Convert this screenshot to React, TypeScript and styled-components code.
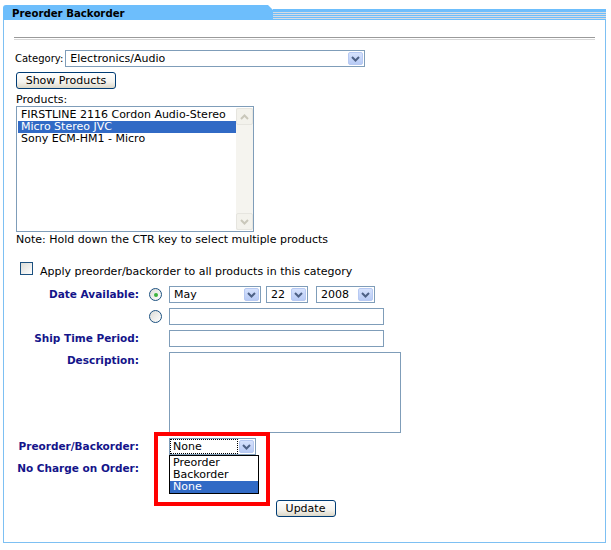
import styled, { createGlobalStyle } from "styled-components";

const GlobalStyle = createGlobalStyle`
  html, body {
    margin: 0;
    padding: 0;
    background: #ffffff;
  }
  body {
    font-family: "DejaVu Sans", Verdana, sans-serif;
    font-size: 11px;
    color: #000000;
  }
`;

const Panel = styled.div`
  margin: 5px 0 0 3px;
  width: 603px;
`;

const Header = styled.div`
  display: flex;
  align-items: flex-end;
  height: 15px;
`;

const Tab = styled.div`
  width: 270px;
  height: 15px;
  background: #6dbefc;
  border-top-left-radius: 3px;
  clip-path: polygon(0 0, 265px 0, 270px 5px, 270px 100%, 0 100%);
  font-weight: bold;
  font-size: 10.2px;
  line-height: 17px;
  padding-left: 9px;
  box-sizing: border-box;
`;

const Stripes = styled.div`
  flex: 1;
  height: 11px;
  background:
    repeating-linear-gradient(
      to bottom,
      #d5dbe2 0 1px,
      #6dbefc 1px 2px
    ) 0 3px / 100% 7px no-repeat,
    #6dbefc;
`;

const Body = styled.div`
  border: 1px solid #7dc0f3;
  border-top: none;
  height: 523px;
  padding: 17px 12px 0 12px;
  box-sizing: border-box;
`;

const Rule = styled.div`
  margin: 0 -2px 10px -2px;
  height: 1px;
  border-top: 1px solid #9a9a9a;
  border-bottom: 1px solid #d8d8d8;
`;

const InlineRow = styled.div`
  display: flex;
  align-items: center;
  gap: 2px;
  height: 17px;
`;

const FieldCaption = styled.span`
  font-size: 10px;
  margin-left: -1px;
`;

const SelectBox = styled.div<{ $w: number }>`
  position: relative;
  width: ${(p) => p.$w}px;
  height: 17px;
  border: 1px solid #7f9db9;
  box-sizing: border-box;
  background: #fff;
  display: flex;
  align-items: center;
  padding-left: 4px;
  white-space: nowrap;
`;

const ArrowBtn = styled.span`
  position: absolute;
  right: 1px;
  top: 1px;
  width: 15px;
  height: 13px;
  border: 1px solid #b7c9f2;
  border-radius: 2px;
  box-sizing: border-box;
  background: linear-gradient(to bottom, #d6e2fd, #b8cbf5);
  display: flex;
  align-items: center;
  justify-content: center;
`;

const Focused = styled.span`
  outline: 1px dotted #000;
  outline-offset: 0;
  width: 64px;
  padding-left: 2px;
  margin-left: -3px;
  line-height: 13px;
`;

const XpButton = styled.button<{ $w: number }>`
  width: ${(p) => p.$w}px;
  height: 17px;
  padding: 0;
  font-family: inherit;
  font-size: 11px;
  color: #000;
  border: 1px solid #003c74;
  border-radius: 3px;
  background: linear-gradient(to bottom, #ffffff 0%, #f4f3ee 60%, #dcd8c8 100%);
`;

const ButtonRow = styled.div`
  display: flex;
  margin-top: 5px;
`;

const Caption = styled.div`
  margin-top: 5px;
  line-height: 12px;
`;

const ListBox = styled.div`
  width: 238px;
  height: 126px;
  border: 1px solid #7f9db9;
  box-sizing: border-box;
  display: flex;
  padding: 1px 0 1px 1px;
`;

const ListItems = styled.div`
  flex: 1;
  padding-top: 1px;
`;

const ListItem = styled.div<{ $sel?: boolean }>`
  height: 12px;
  line-height: 12px;
  padding-left: 3px;
  white-space: nowrap;
  background: ${(p) => (p.$sel ? "#316ac5" : "transparent")};
  color: ${(p) => (p.$sel ? "#fff" : "#000")};
`;

const ScrollBar = styled.div`
  width: 17px;
  background: #f5f4ef;
  display: flex;
  flex-direction: column;
  justify-content: space-between;
`;

const ScrollBtn = styled.div`
  height: 17px;
  border: 1px solid #e6e5df;
  border-radius: 2px;
  box-sizing: border-box;
  background: #f3f2ec;
  display: flex;
  align-items: center;
  justify-content: center;
`;

const Note = styled.div`
  margin-top: 1px;
  line-height: 13px;
`;

const CheckRow = styled.div`
  display: flex;
  align-items: center;
  gap: 7px;
  margin: 19px 0 0 4px;
  line-height: 14px;
`;

const CheckBox = styled.span`
  width: 13px;
  height: 13px;
  border: 1px solid #1c5180;
  box-sizing: border-box;
  background: linear-gradient(135deg, #dcdcd7, #ffffff);
  margin-top: -7px;
`;

const FormGrid = styled.div`
  display: grid;
  grid-template-columns: 123px 30px auto;
  row-gap: 5px;
  margin-top: 7px;
  position: relative;
`;

const Label = styled.div`
  grid-column: 1;
  text-align: right;
  font-weight: bold;
  font-size: 10.5px;
  color: #14148a;
  line-height: 17px;
  white-space: nowrap;
`;

const RadioCell = styled.div`
  grid-column: 2;
  padding-left: 10px;
  display: flex;
  align-items: center;
  height: 17px;
`;

const Radio = styled.span<{ $on?: boolean }>`
  width: 13px;
  height: 13px;
  border-radius: 50%;
  border: 1px solid #1c5180;
  box-sizing: border-box;
  background: linear-gradient(135deg, #dcdcd7, #ffffff);
  display: flex;
  align-items: center;
  justify-content: center;
  &::after {
    content: "";
    width: 4px;
    height: 4px;
    border-radius: 50%;
    background: ${(p) => (p.$on ? "#3bb33b" : "transparent")};
  }
`;

const Field = styled.div`
  grid-column: 3;
  display: flex;
  gap: 5px;
  position: relative;
`;

const TextInput = styled.div<{ $w: number; $h?: number }>`
  width: ${(p) => p.$w}px;
  height: ${(p) => p.$h ?? 17}px;
  border: 1px solid #7f9db9;
  box-sizing: border-box;
  background: #fff;
`;

const DropList = styled.div`
  position: absolute;
  left: 0;
  top: 17px;
  width: 88px;
  border: 1px solid #000;
  background: #fff;
  padding: 1px 0 0 0;
  z-index: 2;
`;

const DropItem = styled.div<{ $sel?: boolean }>`
  height: 12px;
  line-height: 12px;
  padding-left: 3px;
  background: ${(p) => (p.$sel ? "#316ac5" : "transparent")};
  color: ${(p) => (p.$sel ? "#fff" : "#000")};
`;

const Highlight = styled.div`
  position: absolute;
  left: -15px;
  top: -6px;
  width: 116px;
  height: 74px;
  border: 4px solid #ff0000;
  box-sizing: border-box;
  z-index: 1;
  pointer-events: none;
`;

const UpdateRow = styled.div`
  display: flex;
  justify-content: center;
  margin-top: 23px;
  padding-left: 2px;
`;

function Chevron() {
  return (
    <svg width="9" height="6" viewBox="0 0 9 6">
      <path d="M1 1 L4.5 4.5 L8 1" fill="none" stroke="#4d6185" strokeWidth="2" />
    </svg>
  );
}

function ScrollArrow({ up }: { up?: boolean }) {
  return (
    <svg width="9" height="6" viewBox="0 0 9 6">
      <path
        d={up ? "M1 5 L4.5 1.5 L8 5" : "M1 1 L4.5 4.5 L8 1"}
        fill="none"
        stroke="#c9c7ba"
        strokeWidth="2"
      />
    </svg>
  );
}

function Select({ w, children }: { w: number; children: React.ReactNode }) {
  return (
    <SelectBox $w={w}>
      {children}
      <ArrowBtn>
        <Chevron />
      </ArrowBtn>
    </SelectBox>
  );
}

export default function App() {
  return (
    <>
      <GlobalStyle />
      <Panel>
        <Header>
          <Tab>Preorder Backorder</Tab>
          <Stripes />
        </Header>
        <Body>
          <Rule />
          <InlineRow>
            <FieldCaption>Category:</FieldCaption>
            <Select w={300}>Electronics/Audio</Select>
          </InlineRow>
          <ButtonRow>
            <XpButton $w={100}>Show Products</XpButton>
          </ButtonRow>
          <Caption>Products:</Caption>
          <ListBox>
            <ListItems>
              <ListItem>FIRSTLINE 2116 Cordon Audio-Stereo</ListItem>
              <ListItem $sel>Micro Stereo JVC</ListItem>
              <ListItem>Sony ECM-HM1 - Micro</ListItem>
            </ListItems>
            <ScrollBar>
              <ScrollBtn>
                <ScrollArrow up />
              </ScrollBtn>
              <ScrollBtn>
                <ScrollArrow />
              </ScrollBtn>
            </ScrollBar>
          </ListBox>
          <Note>Note: Hold down the CTR key to select multiple products</Note>
          <CheckRow>
            <CheckBox />
            <span>Apply preorder/backorder to all products in this category</span>
          </CheckRow>
          <FormGrid>
            <Label>Date Available:</Label>
            <RadioCell>
              <Radio $on />
            </RadioCell>
            <Field>
              <Select w={92}>May</Select>
              <Select w={42}>22</Select>
              <span style={{ marginLeft: 3 }}>
                <Select w={59}>2008</Select>
              </span>
            </Field>

            <RadioCell>
              <Radio />
            </RadioCell>
            <Field>
              <TextInput $w={215} />
            </Field>

            <Label>Ship Time Period:</Label>
            <Field>
              <TextInput $w={215} />
            </Field>

            <Label>Description:</Label>
            <Field>
              <TextInput $w={232} $h={81} />
            </Field>

            <Label>Preorder/Backorder:</Label>
            <Field>
              <Highlight />
              <SelectBox $w={87}>
                <Focused>None</Focused>
                <ArrowBtn>
                  <Chevron />
                </ArrowBtn>
              </SelectBox>
              <DropList>
                <DropItem>Preorder</DropItem>
                <DropItem>Backorder</DropItem>
                <DropItem $sel>None</DropItem>
              </DropList>
            </Field>

            <Label>No Charge on Order:</Label>
            <Field />
          </FormGrid>
          <UpdateRow>
            <XpButton $w={60}>Update</XpButton>
          </UpdateRow>
        </Body>
      </Panel>
    </>
  );
}
